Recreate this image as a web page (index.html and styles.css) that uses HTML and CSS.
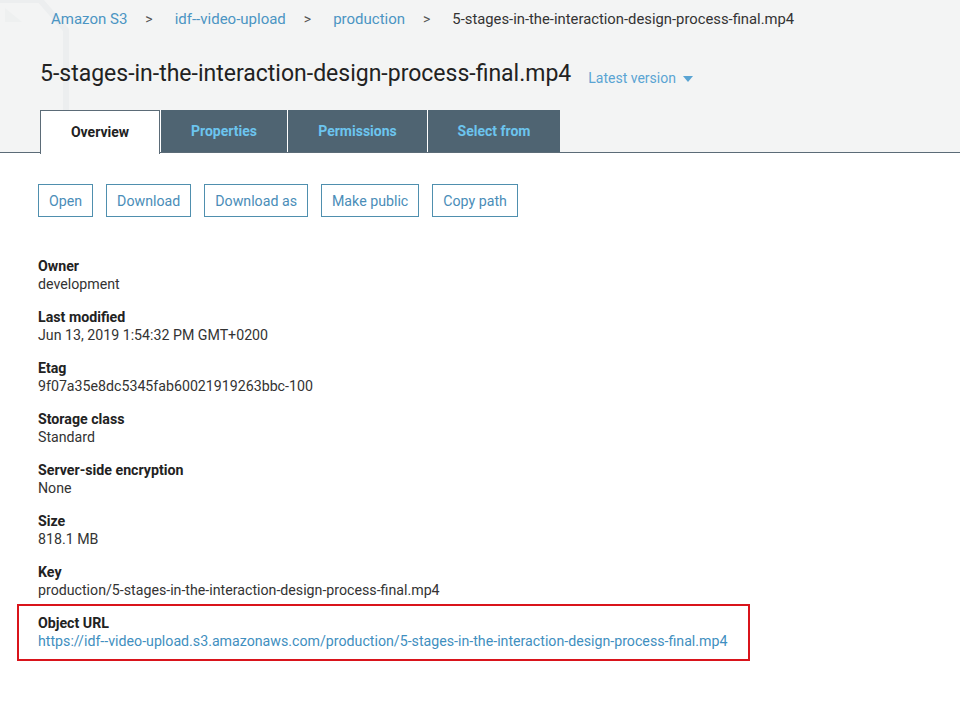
FILE: index.html
```html
<!DOCTYPE html>
<html lang="en">

<head>
    <meta charset="UTF-8">
    <meta name="viewport" content="width=device-width, initial-scale=1.0">
    <title>5-stages-in-the-interaction-design-process-final.mp4</title>
    <link rel="stylesheet" href="styles.css">
</head>

<body>
    <div class="head">
        <svg class="mark" width="70" height="153" viewBox="0 0 70 153">
            <path d="M-2 0 L40 0 L66 30 L66 153" fill="none" stroke="#eceeef" stroke-width="6" />
            <path d="M5 8 L5 22 L22 22 Z" fill="#eef0f0" />
        </svg>
        <div class="crumbs">
            <a href="#">Amazon S3</a>
            <span class="sep">&gt;</span>
            <a href="#">idf--video-upload</a>
            <span class="sep">&gt;</span>
            <a href="#">production</a>
            <span class="sep">&gt;</span>
            <span class="cur">5-stages-in-the-interaction-design-process-final.mp4</span>
        </div>
        <div class="title">
            <h1>5-stages-in-the-interaction-design-process-final.mp4</h1>
            <span class="ver">Latest version <span class="caret"></span></span>
        </div>
        <div class="tabs">
            <div class="tab active">Overview</div>
            <div class="tab">Properties</div>
            <div class="tab">Permissions</div>
            <div class="tab">Select from</div>
        </div>
    </div>

    <div class="main">
        <div class="btns">
            <button class="btn">Open</button>
            <button class="btn">Download</button>
            <button class="btn">Download as</button>
            <button class="btn">Make public</button>
            <button class="btn">Copy path</button>
        </div>

        <div class="info">
            <div class="row">
                <div class="lbl">Owner</div>
                <div class="val">development</div>
            </div>
            <div class="row">
                <div class="lbl">Last modified</div>
                <div class="val">Jun 13, 2019 1:54:32 PM GMT+0200</div>
            </div>
            <div class="row">
                <div class="lbl">Etag</div>
                <div class="val">9f07a35e8dc5345fab60021919263bbc-100</div>
            </div>
            <div class="row">
                <div class="lbl">Storage class</div>
                <div class="val">Standard</div>
            </div>
            <div class="row">
                <div class="lbl">Server-side encryption</div>
                <div class="val">None</div>
            </div>
            <div class="row">
                <div class="lbl">Size</div>
                <div class="val">818.1 MB</div>
            </div>
            <div class="row">
                <div class="lbl">Key</div>
                <div class="val">production/5-stages-in-the-interaction-design-process-final.mp4</div>
            </div>
            <div class="row marked">
                <div class="lbl">Object URL</div>
                <a class="val link" href="#">https://idf--video-upload.s3.amazonaws.com/production/5-stages-in-the-interaction-design-process-final.mp4</a>
            </div>
        </div>
    </div>
</body>

</html>
```

FILE: styles.css
```css
body {
    margin: 0;
    background-color: white;
    font-family: Roboto, "Liberation Sans", sans-serif;
    color: #333;
}

a {
    text-decoration: none;
    color: #3f8fc0;
}

.head {
    position: relative;
    background-color: #f3f4f4;
    padding: 0 0 0 40px;
    border-bottom: 1px solid #5b6b77;
    height: 153px;
    box-sizing: border-box;
}

.mark {
    position: absolute;
    left: 0;
    top: 0;
}

.crumbs {
    position: relative;
    display: flex;
    align-items: center;
    height: 37px;
    padding-left: 11px;
    font-size: 15px;
}

.crumbs a {
    color: #4b95c3;
}

.sep {
    color: #555;
    margin: 0 22px 0 18px;
    font-size: 14px;
}

.cur {
    color: #333;
    font-size: 14.8px;
}

.title {
    position: relative;
    display: flex;
    align-items: flex-end;
    height: 73px;
    padding: 24px 0 23px;
    box-sizing: border-box;
}

h1 {
    margin: 0;
    font-size: 23px;
    font-weight: 400;
    color: #222;
    line-height: 26px;
}

.ver {
    margin-left: 17px;
    font-size: 14px;
    line-height: 18px;
    color: #5aa4d3;
}

.caret {
    display: inline-block;
    width: 0;
    height: 0;
    border-left: 5px solid transparent;
    border-right: 5px solid transparent;
    border-top: 6px solid #5aa4d3;
    margin-left: 4px;
    vertical-align: 1px;
}

.tabs {
    position: relative;
    display: flex;
    height: 43px;
}

.tab {
    background-color: #4f6472;
    color: #6cc4ee;
    font-weight: 700;
    font-size: 14px;
    display: flex;
    align-items: center;
    justify-content: center;
    height: 42px;
    border-left: 1px solid white;
    box-sizing: border-box;
}

.tab:nth-child(2) { width: 127px; }
.tab:nth-child(3) { width: 140px; }
.tab:nth-child(4) { width: 133px; }

.tab.active {
    width: 120px;
    height: 44px;
    background-color: white;
    color: #222;
    border: 1px solid #5b6b77;
    border-bottom: none;
    padding-bottom: 2px;
}

.main {
    padding: 31px 38px 40px;
}

.btns {
    display: flex;
    gap: 13px;
}

.btn {
    font-family: Roboto, "Liberation Sans", sans-serif;
    font-size: 14.2px;
    color: #4a8db8;
    background-color: white;
    border: 1px solid #4f8fae;
    border-radius: 0;
    height: 33px;
    padding: 0 10px;
    cursor: pointer;
}

.info {
    margin-top: 40px;
}

.row {
    display: flex;
    flex-direction: column;
    margin-bottom: 15px;
    font-size: 14.2px;
    line-height: 18px;
}

.lbl {
    font-weight: 700;
    color: #222;
}

.val {
    color: #333;
}

.val.link {
    color: #3f8fc0;
}

.marked {
    margin: -10px 0 0 -21px;
    padding: 8px 21px 9px 19px;
    border: 2px solid #d9141b;
    width: fit-content;
}
```
